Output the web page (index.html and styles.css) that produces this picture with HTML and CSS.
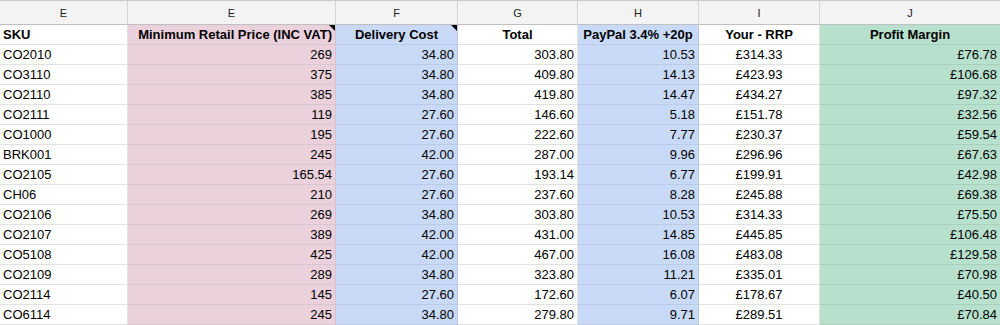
FILE: index.html
```html
<!DOCTYPE html>
<html>
<head>
<meta charset="utf-8">
<link rel="stylesheet" href="styles.css">
</head>
<body>
<div class="sheet">
  <div class="ch">E</div><div class="ch">E</div><div class="ch">F</div><div class="ch">G</div><div class="ch">H</div><div class="ch">I</div><div class="ch last">J</div>

  <div class="c b">SKU</div><div class="c pink b r note">Minimum Retail Price (INC VAT)</div><div class="c blue b ctr note">Delivery Cost</div><div class="c b ctr">Total</div><div class="c blue b ctr">PayPal 3.4% +20p</div><div class="c b ctr">Your - RRP</div><div class="c green b ctr last">Profit Margin</div>

  <div class="c">CO2010</div><div class="c pink r">269</div><div class="c blue r">34.80</div><div class="c r">303.80</div><div class="c blue r">10.53</div><div class="c ctr">£314.33</div><div class="c green r last">£76.78</div>
  <div class="c">CO3110</div><div class="c pink r">375</div><div class="c blue r">34.80</div><div class="c r">409.80</div><div class="c blue r">14.13</div><div class="c ctr">£423.93</div><div class="c green r last">£106.68</div>
  <div class="c">CO2110</div><div class="c pink r">385</div><div class="c blue r">34.80</div><div class="c r">419.80</div><div class="c blue r">14.47</div><div class="c ctr">£434.27</div><div class="c green r last">£97.32</div>
  <div class="c">CO2111</div><div class="c pink r">119</div><div class="c blue r">27.60</div><div class="c r">146.60</div><div class="c blue r">5.18</div><div class="c ctr">£151.78</div><div class="c green r last">£32.56</div>
  <div class="c">CO1000</div><div class="c pink r">195</div><div class="c blue r">27.60</div><div class="c r">222.60</div><div class="c blue r">7.77</div><div class="c ctr">£230.37</div><div class="c green r last">£59.54</div>
  <div class="c">BRK001</div><div class="c pink r">245</div><div class="c blue r">42.00</div><div class="c r">287.00</div><div class="c blue r">9.96</div><div class="c ctr">£296.96</div><div class="c green r last">£67.63</div>
  <div class="c">CO2105</div><div class="c pink r">165.54</div><div class="c blue r">27.60</div><div class="c r">193.14</div><div class="c blue r">6.77</div><div class="c ctr">£199.91</div><div class="c green r last">£42.98</div>
  <div class="c">CH06</div><div class="c pink r">210</div><div class="c blue r">27.60</div><div class="c r">237.60</div><div class="c blue r">8.28</div><div class="c ctr">£245.88</div><div class="c green r last">£69.38</div>
  <div class="c">CO2106</div><div class="c pink r">269</div><div class="c blue r">34.80</div><div class="c r">303.80</div><div class="c blue r">10.53</div><div class="c ctr">£314.33</div><div class="c green r last">£75.50</div>
  <div class="c">CO2107</div><div class="c pink r">389</div><div class="c blue r">42.00</div><div class="c r">431.00</div><div class="c blue r">14.85</div><div class="c ctr">£445.85</div><div class="c green r last">£106.48</div>
  <div class="c">CO5108</div><div class="c pink r">425</div><div class="c blue r">42.00</div><div class="c r">467.00</div><div class="c blue r">16.08</div><div class="c ctr">£483.08</div><div class="c green r last">£129.58</div>
  <div class="c">CO2109</div><div class="c pink r">289</div><div class="c blue r">34.80</div><div class="c r">323.80</div><div class="c blue r">11.21</div><div class="c ctr">£335.01</div><div class="c green r last">£70.98</div>
  <div class="c">CO2114</div><div class="c pink r">145</div><div class="c blue r">27.60</div><div class="c r">172.60</div><div class="c blue r">6.07</div><div class="c ctr">£178.67</div><div class="c green r last">£40.50</div>
  <div class="c">CO6114</div><div class="c pink r">245</div><div class="c blue r">34.80</div><div class="c r">279.80</div><div class="c blue r">9.71</div><div class="c ctr">£289.51</div><div class="c green r last">£70.84</div>
</div>
</body>
</html>
```
FILE: styles.css
```css
* { box-sizing: border-box; }
html, body { margin: 0; padding: 0; background: #fff; }
body { font-family: "Liberation Sans", Arial, sans-serif; color: #000; overflow: hidden; }
.sheet {
  display: grid;
  grid-template-columns: 128px 208px 122px 120px 121px 121px 180px;
  grid-template-rows: 25px;
  grid-auto-rows: 20px;
  width: 1000px;
}
.ch {
  background: #f3f3f3;
  border-top: 1px solid #c8c8c8;
  border-bottom: 1px solid #c0c0c0;
  border-right: 1px solid #d4d4d4;
  font-size: 11px;
  color: #222;
  display: flex;
  align-items: center;
  justify-content: center;
}
.c {
  position: relative;
  font-size: 13px;
  line-height: 20px;
  padding: 0 3px;
  border-right: 1px solid #e2e2e2;
  border-bottom: 1px solid #e2e2e2;
  white-space: nowrap;
  overflow: hidden;
}
.last { border-right: none; }
.b { font-weight: bold; }
.r { text-align: right; }
.ctr { text-align: center; }
.pink { background: #ead1dc; border-right-color: #d8c2cc; border-bottom-color: #d9c7cf; }
.blue { background: #c9daf8; border-right-color: #b9c9e4; border-bottom-color: #bccbe6; }
.green { background: #b7e1cd; border-bottom-color: #a9d0bd; }
.note::after {
  content: "";
  position: absolute;
  top: 0;
  right: 0;
  width: 0;
  height: 0;
  border-top: 6px solid #000;
  border-left: 6px solid transparent;
}
```
